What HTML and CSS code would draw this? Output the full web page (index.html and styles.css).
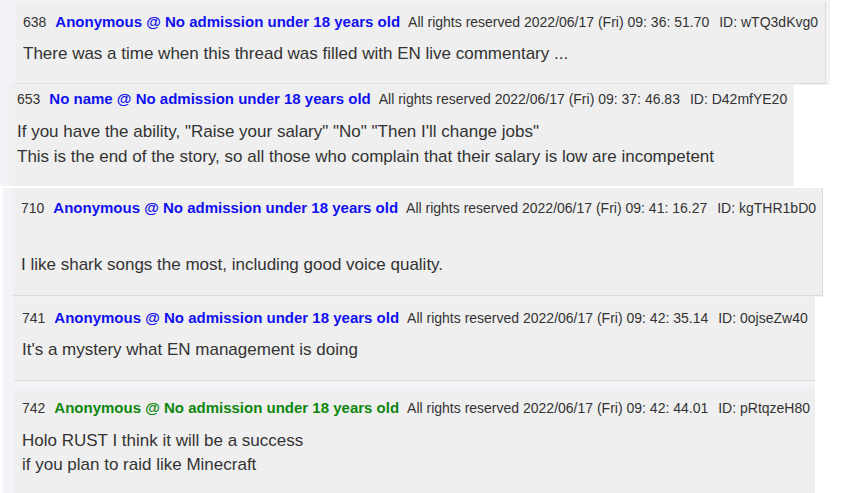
FILE: index.html
```html
<!DOCTYPE html>
<html lang="en">
<head>
<meta charset="utf-8">
<title>Thread</title>
<link rel="stylesheet" href="styles.css">
</head>
<body>
<div class="thread">
  <div class="row row-1">
    <article class="post post-1 bordered">
      <div class="head"><span class="num">638</span><span class="name">Anonymous @ No admission under 18 years old</span><span class="date">All rights reserved 2022/06/17 (Fri) 09: 36: 51.70</span><span class="uid">ID: wTQ3dKvg0</span></div>
      <div class="body">There was a time when this thread was filled with EN live commentary ...</div>
    </article>
  </div>
  <div class="row row-2">
    <article class="post post-2">
      <div class="head"><span class="num">653</span><span class="name">No name @ No admission under 18 years old</span><span class="date">All rights reserved 2022/06/17 (Fri) 09: 37: 46.83</span><span class="uid">ID: D42mfYE20</span></div>
      <div class="body">If you have the ability, "Raise your salary" "No" "Then I'll change jobs"<br>This is the end of the story, so all those who complain that their salary is low are incompetent</div>
    </article>
  </div>
  <div class="row row-3">
    <article class="post post-3 bordered">
      <div class="head"><span class="num">710</span><span class="name">Anonymous @ No admission under 18 years old</span><span class="date">All rights reserved 2022/06/17 (Fri) 09: 41: 16.27</span><span class="uid">ID: kgTHR1bD0</span></div>
      <div class="body">I like shark songs the most, including good voice quality.</div>
    </article>
  </div>
  <div class="row row-4">
    <article class="post post-4">
      <div class="head"><span class="num">741</span><span class="name">Anonymous @ No admission under 18 years old</span><span class="date">All rights reserved 2022/06/17 (Fri) 09: 42: 35.14</span><span class="uid">ID: 0ojseZw40</span></div>
      <div class="body">It's a mystery what EN management is doing</div>
    </article>
  </div>
  <div class="row row-5">
    <article class="post post-5">
      <div class="head"><span class="num">742</span><span class="name name-green">Anonymous @ No admission under 18 years old</span><span class="date">All rights reserved 2022/06/17 (Fri) 09: 42: 44.01</span><span class="uid">ID: pRtqzeH80</span></div>
      <div class="body">Holo RUST I think it will be a success<br>if you plan to raid like Minecraft</div>
    </article>
  </div>
</div>
</body>
</html>
```

FILE: styles.css
```css
* { box-sizing: border-box; }

html, body {
  margin: 0;
  padding: 0;
  background: #ffffff;
  overflow: hidden;
}

body {
  font-family: "Liberation Sans", Arial, sans-serif;
  color: #333333;
  width: 851px;
  height: 493px;
}

.thread {
  display: flex;
  flex-direction: column;
}

.row {
  display: flex;
  background: #f2f3f7;
}

.post {
  flex: 1;
  background: #efefef;
  padding-left: 8px;
}

.post.bordered {
  border-right: 1px solid #dcdcdc;
  border-bottom: 1px solid #dcdcdc;
}

.head {
  display: flex;
  align-items: baseline;
  column-gap: 9px;
  font-size: 14px;
  line-height: 20px;
  white-space: nowrap;
  color: #333333;
}

.name {
  font-size: 15px;
  font-weight: bold;
  color: #1010f0;
}

.name-green {
  color: #0d870d;
}

.date {
  margin-left: -1px;
}

.uid {
  margin-left: 1px;
}

.body {
  font-size: 17px;
  line-height: 25px;
  margin-top: 9px;
  color: #333333;
}

/* row 1 */
.row-1 {
  width: 830px;
  padding: 2px 4px 1px 15px;
}
.post-1 {
  height: 82px;
  padding-top: 10px;
}

/* row 2 */
.row-2 {
  width: 794px;
  padding-left: 9px;
  margin-bottom: 2px;
}
.post-2 {
  height: 101px;
  padding-top: 4px;
}
.post-2 .body {
  margin-top: 10px;
}

/* row 3 */
.row-3 {
  width: 820px;
  margin-left: 3px;
  padding: 0 0 1px 10px;
}
.post-3 {
  height: 108px;
  padding-top: 10px;
}
.post-3 .body {
  margin-top: 34px;
}

/* row 4 */
.row-4 {
  width: 812px;
  margin-left: 3px;
  padding: 0 0 8px 11px;
}
.post-4 {
  height: 84px;
  padding-top: 10.5px;
  border-bottom: 1px solid #dcdcdc;
}

/* row 5 */
.row-5 {
  width: 812px;
  margin-left: 3px;
  padding-left: 11px;
}
.post-5 {
  height: 110px;
  padding-top: 8.5px;
}
.post-5 .body {
  margin-top: 11px;
  line-height: 24.5px;
}
```
